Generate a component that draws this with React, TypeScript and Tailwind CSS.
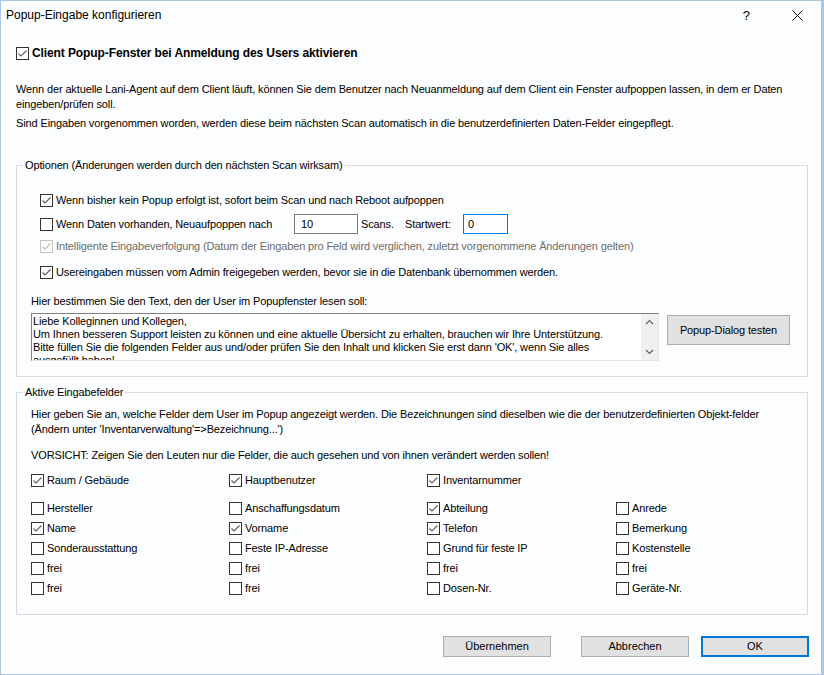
import React from "react";

type CheckProps = {
  label: string;
  checked?: boolean;
  disabled?: boolean;
  bold?: boolean;
};

function Check({ label, checked, disabled, bold }: CheckProps) {
  const stroke = disabled ? "#c4c4c4" : "#333333";
  const mark = disabled ? "#bcbcbc" : "#5c5c5c";
  return (
    <div className="flex h-[13px] items-center whitespace-nowrap">
      <svg width="13" height="13" viewBox="0 0 13 13" className="shrink-0">
        <rect x="0.5" y="0.5" width="12" height="12" fill="#ffffff" stroke={stroke} />
        {checked && (
          <path
            d="M2.5 6.5 L5 9 L10.5 3.5"
            fill="none"
            stroke={mark}
            strokeWidth="1.1"
          />
        )}
      </svg>
      <span
        className={
          "ml-[3px] " +
          (bold ? "text-[12px] font-bold tracking-[-0.1px] " : "") +
          (disabled ? "text-[#6d6d6d]" : "text-black")
        }
      >
        {label}
      </span>
    </div>
  );
}

const fields: [string, boolean][][] = [
  [
    ["Hersteller", false],
    ["Anschaffungsdatum", false],
    ["Abteilung", true],
    ["Anrede", false],
  ],
  [
    ["Name", true],
    ["Vorname", true],
    ["Telefon", true],
    ["Bemerkung", false],
  ],
  [
    ["Sonderausstattung", false],
    ["Feste IP-Adresse", false],
    ["Grund für feste IP", false],
    ["Kostenstelle", false],
  ],
  [
    ["frei", false],
    ["frei", false],
    ["frei", false],
    ["frei", false],
  ],
  [
    ["frei", false],
    ["frei", false],
    ["Dosen-Nr.", false],
    ["Geräte-Nr.", false],
  ],
];

function WinButton({ label, width, primary }: { label: string; width: string; primary?: boolean }) {
  return (
    <button
      type="button"
      className={
        "flex h-[21px] items-center justify-center bg-[#e1e1e1] text-[11px] text-black " +
        width +
        (primary ? " border-2 border-[#0078d7]" : " border border-[#adadad]")
      }
    >
      {label}
    </button>
  );
}

export default function App() {
  return (
    <div
      className="h-[675px] w-[824px] overflow-hidden border border-[#a9c7e6] border-r-[3px] bg-[#fcfdfe] text-[11px] leading-[15px] tracking-[-0.13px] text-black"
      style={{ fontFamily: '"Liberation Sans", Arial, sans-serif' }}
    >
      {/* title bar */}
      <div className="flex h-[29px] items-center tracking-normal">
        <span className="ml-[5px] text-[12px]">Popup-Eingabe konfigurieren</span>
        <span className="ml-auto mr-[42px] text-[13px]">?</span>
        <svg width="11" height="11" viewBox="0 0 11 11" className="mr-[18px]">
          <path d="M0.5 0.5 L10.5 10.5 M10.5 0.5 L0.5 10.5" stroke="#111" strokeWidth="1" />
        </svg>
      </div>

      <div className="px-[15px]">
        <div className="mt-[17px]">
          <Check label="Client Popup-Fenster bei Anmeldung des Users aktivieren" checked bold />
        </div>

        <p className="mt-[22px]">
          Wenn der aktuelle Lani-Agent auf dem Client läuft, können Sie dem Benutzer nach Neuanmeldung auf dem Client ein Fenster aufpoppen lassen, in dem er Daten eingeben/prüfen soll.
        </p>
        <p className="mt-[4px]">
          Sind Eingaben vorgenommen worden, werden diese beim nächsten Scan automatisch in die benutzerdefinierten Daten-Felder eingepflegt.
        </p>

        <fieldset className="mt-[27px] w-[792px] border border-[#d9dde2]">
          <legend className="ml-[6px] px-[2px]">Optionen (Änderungen werden durch den nächsten Scan wirksam)</legend>
          <div className="pb-[15px] pl-[14px]">
            <div className="flex flex-col pl-[9px]">
              <div className="mt-[21px]">
                <Check label="Wenn bisher kein Popup erfolgt ist, sofort beim Scan und nach Reboot aufpoppen" checked />
              </div>
              <div className="mt-[7px] flex h-[20px] items-center">
                <div className="w-[254px]">
                  <Check label="Wenn Daten vorhanden, Neuaufpoppen nach" />
                </div>
                <div className="flex h-[20px] w-[64px] items-center border border-[#7a7a7a] bg-white pl-[6px]">10</div>
                <span className="ml-[3px] w-[44px]">Scans.</span>
                <span className="w-[58px]">Startwert:</span>
                <div className="flex h-[20px] w-[45px] items-center border border-[#0078d7] bg-white pl-[4px]">0</div>
              </div>
              <div className="mt-[6px]">
                <Check
                  label="Intelligente Eingabeverfolgung (Datum der Eingaben pro Feld wird verglichen, zuletzt vorgenommene Änderungen gelten)"
                  checked
                  disabled
                />
              </div>
              <div className="mt-[13px]">
                <Check label="Usereingaben müssen vom Admin freigegeben werden, bevor sie in die Datenbank übernommen werden." checked />
              </div>
            </div>

            <p className="mt-[15px]">Hier bestimmen Sie den Text, den der User im Popupfenster lesen soll:</p>
            <div className="mt-[4px] flex items-start">
              <div className="flex h-[48px] w-[628px] border border-b-[#e3e3e3] border-l-[#828282] border-r-[#e3e3e3] border-t-[#828282] bg-white">
                <div className="flex-1 overflow-hidden pl-[1px] pt-[1px] text-[11px] leading-[13px]">
                  Liebe Kolleginnen und Kollegen,
                  <br />
                  Um Ihnen besseren Support leisten zu können und eine aktuelle Übersicht zu erhalten, brauchen wir Ihre Unterstützung.
                  <br />
                  Bitte füllen Sie die folgenden Felder aus und/oder prüfen Sie den Inhalt und klicken Sie erst dann 'OK', wenn Sie alles
                  <br />
                  ausgefüllt haben!
                </div>
                <div className="flex w-[17px] flex-col items-center justify-between bg-[#f0f0f0] py-[5px]">
                  <svg width="9" height="6" viewBox="0 0 9 6">
                    <path d="M1 5 L4.5 1.5 L8 5" fill="none" stroke="#606060" strokeWidth="1.2" />
                  </svg>
                  <svg width="9" height="6" viewBox="0 0 9 6">
                    <path d="M1 1 L4.5 4.5 L8 1" fill="none" stroke="#606060" strokeWidth="1.2" />
                  </svg>
                </div>
              </div>
              <div className="ml-[8px] mt-[2px]">
                <button
                  type="button"
                  className="flex h-[30px] w-[123px] items-center justify-center border border-[#adadad] bg-[#e1e1e1] text-[11px]"
                >
                  Popup-Dialog testen
                </button>
              </div>
            </div>
          </div>
        </fieldset>

        <fieldset className="mt-[8px] w-[792px] border border-[#d9dde2]">
          <legend className="ml-[6px] px-[2px]">Aktive Eingabefelder</legend>
          <div className="pb-[19px] pl-[14px]">
            <p className="mt-[7px]">
              Hier geben Sie an, welche Felder dem User im Popup angezeigt werden. Die Bezeichnungen sind dieselben wie die der benutzerdefinierten Objekt-felder
              <br />
              (Ändern unter 'Inventarverwaltung'=&gt;Bezeichnung...')
            </p>
            <p className="mt-[11px]">
              VORSICHT: Zeigen Sie den Leuten nur die Felder, die auch gesehen und von ihnen verändert werden sollen!
            </p>
            <div className="mt-[11px] grid grid-cols-[198px_198px_189px_150px]">
              <Check label="Raum / Gebäude" checked />
              <Check label="Hauptbenutzer" checked />
              <Check label="Inventarnummer" checked />
            </div>
            <div className="mt-[15px] grid grid-cols-[198px_198px_189px_150px] gap-y-[7px]">
              {fields.flat().map(([label, checked], i) => (
                <Check key={i} label={label} checked={checked} />
              ))}
            </div>
          </div>
        </fieldset>

        <div className="mt-[21px] flex w-[793px] justify-end tracking-normal">
          <WinButton label="Übernehmen" width="w-[108px]" />
          <div className="ml-[30px]">
            <WinButton label="Abbrechen" width="w-[108px]" />
          </div>
          <div className="ml-[12px]">
            <WinButton label="OK" width="w-[108px]" primary />
          </div>
        </div>
      </div>
    </div>
  );
}
